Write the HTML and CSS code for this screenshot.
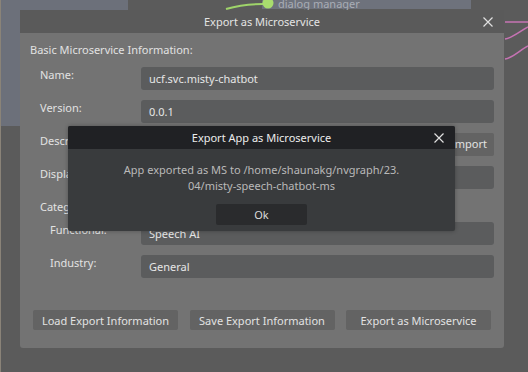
FILE: index.html
```html
<!DOCTYPE html>
<html lang="en">

<head>
  <meta charset="UTF-8">
  <meta name="viewport" content="width=device-width, initial-scale=1.0">
  <title>Export as Microservice</title>
  <link rel="stylesheet" href="styles.css">
</head>

<body>
  <div class="canvas">
    <!-- node graph behind the dialog -->
    <svg class="graph" width="528" height="372" viewBox="0 0 528 372">
      <rect x="1" y="0" width="127" height="126" fill="#6c707a"/>
      <rect x="262" y="-4" width="209" height="13" fill="#6e727c"/>
      <path d="M226 9 C240 5, 250 4, 263 4" stroke="#9fd46a" stroke-width="2" fill="none"/>
      <circle cx="268" cy="3" r="5.5" fill="#a8dc6e"/>
      <text x="278" y="8" class="node-title">dialog manager</text>
      <path d="M505 22 L528 22" stroke="#c673b3" stroke-width="1.5" fill="none"/>
      <path d="M505 39 C513 38, 520 31, 528 27" stroke="#c673b3" stroke-width="1.5" fill="none"/>
      <path d="M505 59 C513 58, 520 50, 528 46" stroke="#c673b3" stroke-width="1.5" fill="none"/>
      <rect x="0" y="0" width="1" height="372" fill="#8a8378"/>
    </svg>

    <div class="dialog">
      <div class="titlebar">
        <span>Export as Microservice</span>
        <svg class="close" width="10" height="10" viewBox="0 0 10 10">
          <path d="M0.5 0.5 L9.5 9.5 M9.5 0.5 L0.5 9.5" stroke="#e0e0e0" stroke-width="1.2"/>
        </svg>
      </div>
      <div class="panel">
        <div class="section-title">Basic Microservice Information:</div>
        <div class="form">
          <label>Name:</label>
          <div class="field">ucf.svc.misty-chatbot</div>

          <label>Version:</label>
          <div class="field">0.0.1</div>

          <label>Description:</label>
          <div class="field-row">
            <div class="field"></div>
            <div class="small-btn">Import</div>
          </div>

          <label>Display Name:</label>
          <div class="field"></div>

          <label>Category:</label>
          <div></div>

          <label class="sub">Functional:</label>
          <div class="field">Speech AI</div>

          <label class="sub">Industry:</label>
          <div class="field">General</div>
        </div>

        <div class="actions">
          <button>Load Export Information</button>
          <button>Save Export Information</button>
          <button>Export as Microservice</button>
        </div>
      </div>
    </div>

    <div class="modal">
      <div class="modal-title">
        <span>Export App as Microservice</span>
        <svg class="close" width="10" height="10" viewBox="0 0 10 10">
          <path d="M0.5 0.5 L9.5 9.5 M9.5 0.5 L0.5 9.5" stroke="#e0e0e0" stroke-width="1.2"/>
        </svg>
      </div>
      <div class="modal-body">
        <p>App exported as MS to /home/shaunakg/nvgraph/23.<br>04/misty-speech-chatbot-ms</p>
        <button class="ok">Ok</button>
      </div>
    </div>
  </div>
</body>

</html>
```

FILE: styles.css
```css
body {
  margin: 0;
  font-family: "Noto Sans", "Open Sans", sans-serif;
  font-size: 11px;
  background-color: #5b5b5b;
}

.canvas {
  position: relative;
  width: 528px;
  height: 372px;
  overflow: hidden;
  background-color: #5b5b5b;
}

.graph {
  position: absolute;
  left: 0;
  top: 0;
}

.node-title {
  font-family: "Noto Sans", sans-serif;
  font-size: 11px;
  fill: #a9adb6;
}

.dialog {
  position: absolute;
  left: 20px;
  top: 10px;
  width: 484px;
  height: 338px;
  display: flex;
  flex-direction: column;
}

.titlebar {
  position: relative;
  height: 23px;
  display: flex;
  align-items: center;
  justify-content: center;
  background-color: #5a5a5a;
  color: #e4e4e4;
}

.titlebar .close {
  position: absolute;
  right: 11px;
  top: 7px;
}

.panel {
  flex: 1;
  background-color: #737373;
  border-radius: 0 0 3px 3px;
  padding: 9px 10px 0 10px;
  color: #e2e2e2;
}

.section-title {
  line-height: 16px;
}

.form {
  display: grid;
  grid-template-columns: 111px 1fr;
  grid-template-rows: 23px 23px 23px 23px 13px 23px 23px;
  row-gap: 10px;
  margin-top: 9px;
}

.form label {
  padding-left: 10px;
  line-height: 16px;
}

.form label.sub {
  padding-left: 20px;
}

.field {
  background-color: #5b5c5d;
  border-radius: 3px;
  padding: 0 8px;
  line-height: 23px;
  color: #e6e6e6;
}

.field-row {
  display: flex;
  gap: 8px;
}

.field-row .field {
  flex: 1;
}

.small-btn {
  background-color: #636363;
  border-radius: 2px;
  padding: 0 7px;
  line-height: 22px;
  color: #e2e2e2;
}

.actions {
  display: flex;
  justify-content: space-between;
  margin: 32px 3px 0 3px;
}

button {
  font-family: "Noto Sans", "Open Sans", sans-serif;
  font-size: 11px;
  color: #e2e2e2;
  background-color: #636363;
  border: none;
  border-radius: 2px;
  width: 145px;
  height: 20px;
  padding: 0;
}

.modal {
  position: absolute;
  left: 68px;
  top: 126px;
  width: 387px;
  height: 105px;
  border-radius: 2px;
  overflow: hidden;
  background-color: #393b3d;
  box-shadow: 0 0 4px rgba(0, 0, 0, 0.3);
}

.modal-title {
  position: relative;
  height: 23px;
  display: flex;
  align-items: center;
  justify-content: center;
  background-color: #202124;
  color: #ececec;
}

.modal-title .close {
  position: absolute;
  right: 11px;
  top: 7px;
}

.modal-body {
  display: flex;
  flex-direction: column;
  align-items: center;
}

.modal-body p {
  margin: 13px 0 0 0;
  text-align: center;
  line-height: 16px;
  color: #b9b9b9;
}

button.ok {
  width: 91px;
  height: 21px;
  margin-top: 10px;
  background-color: #2a2b2d;
  color: #dcdcdc;
}
```
